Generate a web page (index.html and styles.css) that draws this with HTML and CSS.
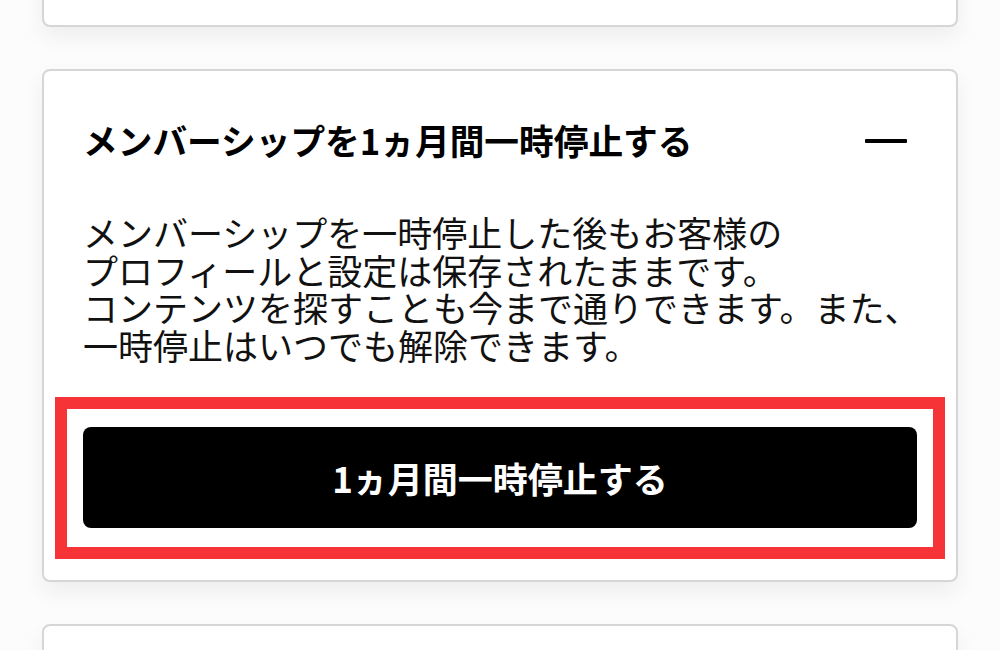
FILE: index.html
```html
<!DOCTYPE html>
<html lang="ja">
<head>
<meta charset="utf-8">
<link rel="stylesheet" href="styles.css">
</head>
<body>
<div class="page">
  <div class="card card-top"></div>
  <div class="card card-main">
    <div class="header">
      <h2 class="title">メンバーシップを1ヵ月間一時停止する</h2>
      <span class="minus"></span>
    </div>
    <p class="desc">メンバーシップを一時停止した後もお客様の<br>プロフィールと設定は保存されたままです。<br>コンテンツを探すことも今まで通りできます。また、<br>一時停止はいつでも解除できます。</p>
    <div class="action">
      <button class="btn">1ヵ月間一時停止する</button>
      <span class="highlight"></span>
    </div>
  </div>
  <div class="card card-bottom"></div>
</div>
</body>
</html>
```

FILE: styles.css
```css
* { box-sizing: border-box; }
html, body {
  margin: 0;
  padding: 0;
  background: #fcfcfc;
  width: 1000px;
  height: 650px;
  overflow: hidden;
  font-family: "Noto Sans CJK JP", "Noto Sans", sans-serif;
  color: #111;
}
.page {
  display: flex;
  flex-direction: column;
  gap: 42px;
  padding: 0 42px;
  margin-top: -199px;
}
.card {
  background: #fff;
  border: 2px solid #d6d6d6;
  border-radius: 8px;
  box-shadow: 0 10px 22px rgba(0, 0, 0, 0.06);
}
.card-top { height: 226px; }
.card-bottom { height: 200px; }
.card-main {
  padding: 51px 39px 52px 39px;
}
.header {
  display: flex;
  align-items: center;
  justify-content: space-between;
}
.title {
  margin: 0;
  font-size: 34.7px;
  line-height: 37px;
  font-weight: 700;
  color: #000;
  white-space: nowrap;
}
.minus {
  width: 42px;
  height: 4px;
  background: #000;
  margin-right: 10px;
  border-radius: 1px;
}
.desc {
  margin: 54px 0 0 0;
  font-size: 35px;
  line-height: 37.6px;
  font-weight: 400;
  white-space: nowrap;
}
.action {
  position: relative;
  margin-top: 64px;
}
.btn {
  display: block;
  width: 100%;
  height: 101px;
  background: #000;
  color: #fff;
  border: none;
  border-radius: 8px;
  font-family: "Noto Sans CJK JP", "Noto Sans", sans-serif;
  font-size: 35px;
  font-weight: 700;
  padding: 0;
}
.highlight {
  position: absolute;
  top: -30px;
  left: -28px;
  right: -28px;
  bottom: -31px;
  border: 12px solid #f63437;
  pointer-events: none;
}
```
